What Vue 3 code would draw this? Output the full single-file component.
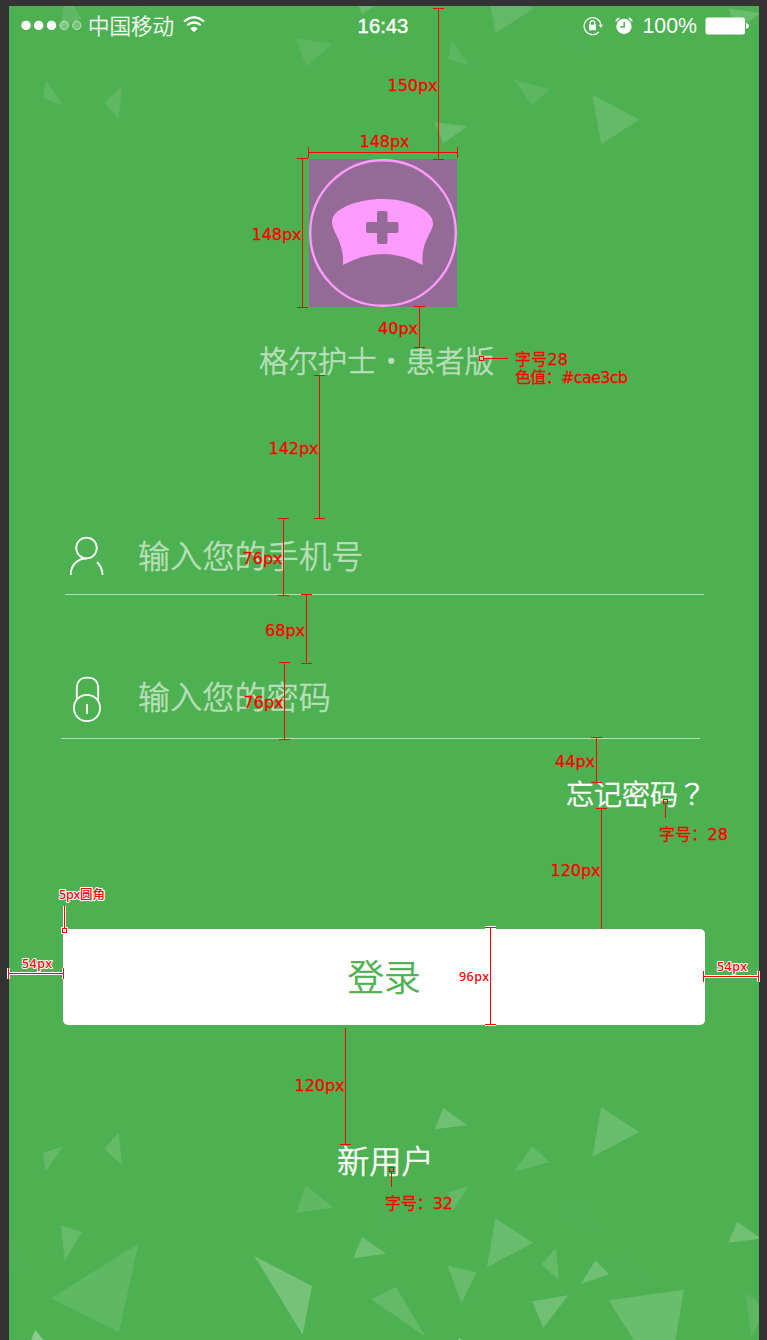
<script setup>
const shards = [
  { p: '43,1153 63.3,1146.3 45.7,1171.3', o: 0.13 },
  { p: '118.7,1132.3 104.3,1149 122,1165.3', o: 0.13 },
  { p: '306,1184.7 333,1207.7 296,1213', o: 0.1 },
  { p: '61,1225 81.7,1232.3 64.7,1261.3', o: 0.14 },
  { p: '9,1238.3 30,1272.7 9,1263.3', o: 0.02 },
  { p: '138.7,1243.3 51,1298.3 119,1332', o: 0.1 },
  { p: '254.3,1256 312,1286 302.7,1334.7', o: 0.23 },
  { p: '35.3,1330 30,1343 46,1343', o: 0.35 },
  { p: '381,1199 416,1216 383,1234', o: 0.02 },
  { p: '362.3,1237 386,1253.7 353,1258.3', o: 0.2 },
  { p: '371,1299.3 395.7,1286.7 425.7,1336.7', o: 0.13 },
  { p: '443.3,1108 467.3,1125.3 434.7,1129.3', o: 0.2 },
  { p: '601.3,1107.3 639.3,1132 592.3,1156.7', o: 0.17 },
  { p: '532,1146.3 549.7,1162.3 514,1171.7', o: 0.12 },
  { p: '448,1192.3 468.7,1186.3 451.7,1211.3', o: 0.12 },
  { p: '495.3,1218.3 533.3,1242.7 487,1267.3', o: 0.16 },
  { p: '556,1247.7 541.7,1264.3 559,1280.7', o: 0.14 },
  { p: '595.3,1260.3 609.3,1274.3 580.7,1284', o: 0.2 },
  { p: '447.3,1265.3 476.3,1272.3 461.7,1303.3', o: 0.15 },
  { p: '532,1301.3 568.3,1295.3 543.3,1327.7', o: 0.2 },
  { p: '608.7,1300.3 684,1289.7 675,1342 635,1342', o: 0.17 },
  { p: '737,1221.7 761,1238.5 728.3,1242.7', o: 0.2 },
  { p: '745.3,1293 762,1305 762,1316 751.3,1337', o: 0.09 },
  { p: '578.7,1200.3 562,1215.7 598,1231', o: 0.02 },
  { p: '627,1253 609,1267.7 645.3,1283.3', o: 0.02 },
  { p: '459.7,1338.5 456,1342 463,1342', o: 0.5 },
]

const rules = [
  'M438.5 8V160M433 8.5h11M433 159.5h11',
  'M308 152.5H458M308.5 147v11M457.5 147v11',
  'M302.5 158V308M297 158.5h11M297 307.5h11',
  'M419.5 306V348M414 306.5h11M414 347.5h11',
  'M319.5 375V519M314 375.5h11M314 518.5h11',
  'M283.5 518V596M278 518.5h11M278 595.5h11',
  'M306.5 594V664M301 594.5h11M301 663.5h11',
  'M284.5 662V740M279 662.5h11M279 739.5h11',
  'M596.5 737V783M591 737.5h11M591 782.5h11',
  'M601.5 808V929M596 808.5h11',
  'M345.5 1028V1145M340 1144.5h11',
  'M479.5 356.5h4v4h-4zM484 358.5H508',
  'M663.5 799.5h4v4h-4zM665.5 804V818',
  'M389.5 1167.5h4v4h-4zM391.5 1172V1187',
]

const outlinedRules = [
  'M490.5 927V1025M485 927.5h11M485 1024.5h11',
  'M8 973.5H64M8.5 968v11M63.5 968v11',
  'M703 976.5H759M703.5 971v11M758.5 971v11',
  'M62.5 928.5h4v4h-4zM64.5 906V928',
]

const labels = [
  { t: '150px', x: 387.5, y: 91, w: 50 },
  { t: '148px', x: 359.5, y: 147, w: 50 },
  { t: '148px', x: 251.5, y: 240, w: 50 },
  { t: '40px', x: 378, y: 334, w: 40 },
  { t: '142px', x: 268.5, y: 454, w: 50 },
  { t: '76px', x: 242.5, y: 564, w: 40 },
  { t: '68px', x: 265, y: 636, w: 40 },
  { t: '76px', x: 243.5, y: 708, w: 40 },
  { t: '44px', x: 555, y: 767, w: 40 },
  { t: '120px', x: 550.5, y: 876, w: 50 },
  { t: '120px', x: 294.5, y: 1091, w: 50 },
  { t: '字号28', x: 515, y: 364.5, w: 53 },
  { t: '色值：#cae3cb', x: 515, y: 382.5, w: 113 },
  { t: '字号：28', x: 659, y: 839.5, w: 69 },
  { t: '字号：32', x: 385, y: 1208.5, w: 68 },
]

const smallLabels = [
  { t: '96px', x: 459, y: 981, w: 30 },
  { t: '54px', x: 22, y: 968, w: 30 },
  { t: '54px', x: 717, y: 971, w: 30 },
  { t: '5px圆角', x: 59, y: 899, w: 46 },
]
</script>

<template>
  <div class="board">
    <svg class="shards" width="767" height="1340" viewBox="0 0 767 1340">
      <defs>
        <clipPath id="screen"><rect x="9" y="6" width="750" height="1334" /></clipPath>
      </defs>
      <g clip-path="url(#screen)" fill="#fff">
        <polygon v-for="(s, i) in shards" :key="'b' + i" :points="s.p" :fill-opacity="s.o" />
        <g transform="translate(0 1251.5) scale(1 -1)" opacity="0.8">
          <polygon v-for="(s, i) in shards" :key="'t' + i" :points="s.p" :fill-opacity="s.o" />
        </g>
      </g>
    </svg>

    <main class="screen">
      <header class="status">
        <div class="status-left">
          <svg width="62" height="12" viewBox="0 0 62 12">
            <g fill="#fff">
              <circle cx="5" cy="6.400" r="4.700" /><circle cx="17.700" cy="6.400" r="4.700" /><circle cx="30.500" cy="6.400" r="4.700" />
            </g>
            <g fill="#fff" fill-opacity=".25" stroke="#fff" stroke-opacity=".6">
              <circle cx="43.200" cy="6.400" r="4.200" /><circle cx="55.800" cy="6.400" r="4.200" />
            </g>
          </svg>
          <span class="carrier">中国移动</span>
          <svg class="wifi" width="22" height="17" viewBox="0 0 22 17" fill="none" stroke="#fff" stroke-width="2.2">
            <path d="M1 5.5Q11-2.8 21 5.5M4.300 9.200Q11 3.800 17.700 9.200" />
            <path d="M7.300 12.400Q11 9.300 14.700 12.400L11 16.300Z" fill="#fff" stroke="none" />
          </svg>
        </div>
        <span class="clock">16:43</span>
        <div class="status-right">
          <svg class="rotation" width="20" height="20" viewBox="0 0 20 20" fill="none" stroke="#fff">
            <path d="M15.800 16A8.500 8.500 0 1 1 18 9" stroke-width="1.2" />
            <path d="M15.700 8.700h4.300L17.900 12z" fill="#fff" stroke="none" />
            <rect x="6" y="8.700" width="7" height="5.500" fill="#fff" stroke="none" />
            <path d="M7.300 9V6.800a2.200 2.200 0 0 1 4.400 0V9" stroke-width="1.4" />
          </svg>
          <svg class="alarm" width="18" height="18" viewBox="0 0 18 18">
            <circle cx="9" cy="9.400" r="7.700" fill="#fff" />
            <path d="M.8 4.400A10 10 0 0 1 4.300 1M17.200 4.400A10 10 0 0 0 13.700 1" fill="none" stroke="#fff" stroke-width="1.6" />
            <path d="M9.200 5v5H5.300" fill="none" stroke="#4db051" stroke-width="1.5" />
          </svg>
          <span class="percent">100%</span>
          <svg class="battery" width="45" height="18" viewBox="0 0 45 18" fill="#fff">
            <rect x=".5" y=".5" width="39.500" height="17" rx="2.5" />
            <path d="M41 6.300q3 .5 3 2.700t-3 2.700z" />
          </svg>
        </div>
      </header>

      <svg class="logo" width="148" height="148" viewBox="0 0 148 148">
        <rect width="148" height="148" fill="#946b97" />
        <circle cx="74" cy="74" r="72.800" fill="none" stroke="#ff9bff" stroke-width="2.4" />
        <path d="M34 106C35.500 82 23 74 23 62.500C23 50 48 40 74 40C100 40 124 51 124 64.500C124 74 111.500 82 113.700 106Q74 84 34 106Z" fill="#ff9bff" />
        <path d="M70 52h6.500q2 0 2 2v9h9q2 0 2 2v7q0 2-2 2h-9v9q0 2-2 2H70q-2 0-2-2v-9h-9q-2 0-2-2v-7q0-2 2-2h9v-9q0-2 2-2z" fill="#946b97" />
      </svg>
      <h1 class="title">格尔护士・患者版</h1>

      <div class="field phone">
        <svg width="36" height="40" viewBox="0 0 36 40" fill="none" stroke="#fff" stroke-width="1.8">
          <circle cx="18.500" cy="12" r="10.300" />
          <path d="M2.700 39C2.700 29 9.500 22.500 18.500 22.500M29 26Q34.500 31.500 34.500 39" />
        </svg>
        <span>输入您的手机号</span>
      </div>
      <div class="field password">
        <svg width="32" height="48" viewBox="0 0 32 48" fill="none" stroke="#fff" stroke-width="1.8">
          <path d="M5.800 24V12.500q0-10.800 10.700-10.800T27.200 12.500V24" />
          <circle cx="16" cy="32" r="13.100" />
          <path d="M16 28v10" />
        </svg>
        <span>输入您的密码</span>
      </div>
      <a class="forgot">忘记密码<span class="mark">？</span></a>
      <button class="login">登录</button>
      <a class="register">新用户</a>
    </main>

    <svg class="notes" width="767" height="1340" viewBox="0 0 767 1340">
      <path v-for="d in rules" :key="d" :d="d" class="rule" />
      <g v-for="d in outlinedRules" :key="d">
        <path :d="d" class="halo" />
        <path :d="d" class="rule" />
      </g>
      <text v-for="(l, i) in labels" :key="'l' + i" :x="l.x" :y="l.y" :textLength="l.w" class="label">{{ l.t }}</text>
      <text v-for="(l, i) in smallLabels" :key="'h' + i" :x="l.x" :y="l.y" :textLength="l.w" class="small">{{ l.t }}</text>
    </svg>
  </div>
</template>

<style>
body {
  background: #333;
}
</style>

<style scoped>
.board {
  position: relative;
  width: 767px;
  height: 1340px;
  box-sizing: border-box;
  padding: 6px 8px 0 9px;
  overflow: hidden;
  background: #333;
  font-family: "Liberation Sans", "Noto Sans CJK SC", sans-serif;
}
.shards,
.notes {
  position: absolute;
  left: 0;
  top: 0;
}
.notes {
  z-index: 2;
}
.shards {
  z-index: 1;
}
.screen {
  display: flex;
  flex-direction: column;
  height: 1334px;
  background: #4db051;
}
.screen > * {
  position: relative;
  z-index: 1;
}
.status {
  display: grid;
  grid-template-columns: 1fr auto 1fr;
  align-items: center;
  height: 40px;
  padding: 0 10px 0 11px;
  color: #fff;
}
.status-left,
.status-right {
  display: flex;
  align-items: center;
}
.status-left {
  margin-top: -2px;
}
.status-left > svg:first-child {
  margin-left: 1px;
}
.status-right {
  justify-content: flex-end;
}
.carrier {
  margin-left: 5px;
  font: 300 21.5px/30px "Noto Sans CJK SC", sans-serif;
  -webkit-text-stroke: 0.3px currentColor;
}
.wifi {
  margin-left: 9px;
  margin-bottom: 1px;
}
.clock {
  margin-right: 3px;
  font-size: 20.3px;
  -webkit-text-stroke: 0.4px #fff;
}
.rotation {
  margin-top: -1px;
}
.alarm {
  margin: -1px 10px 0 12px;
}
.percent {
  font-size: 21.3px;
}
.battery {
  margin: -1px -1px 0 8px;
}
.logo {
  flex: none;
  margin: 113px 0 0 300px;
}
.title {
  margin: 30px 0 0 250px;
  height: 44px;
  font: 300 29.4px/44px "Noto Sans CJK SC", sans-serif;
  color: #b8dfba;
  white-space: nowrap;
}
.title,
.field span,
.forgot,
.login,
.register {
  -webkit-text-stroke: 0.7px currentColor;
}
.field {
  display: flex;
  align-items: center;
  box-sizing: border-box;
  width: 639px;
  height: 77px;
  border-bottom: 1px solid #b8dfba;
  font: 300 32px/48px "Noto Sans CJK SC", sans-serif;
  color: #b8dfba;
}
.field svg {
  flex: none;
}
.phone {
  margin: 137px 0 0 56px;
  padding-left: 3px;
}
.phone span {
  margin: -5px 0 0 34px;
  letter-spacing: 0.2px;
}
.password {
  margin: 67px 0 0 52px;
  padding-left: 10px;
}
.password span {
  margin: -11px 0 0 35px;
  letter-spacing: 0.15px;
}
.forgot {
  align-self: flex-end;
  margin: 33px 53px 0 0;
  font: 300 28px/42px "Noto Sans CJK SC", sans-serif;
  color: #fff;
}
.mark {
  font-family: "Noto Sans CJK TC", sans-serif;
}
.login {
  flex: none;
  width: 642px;
  height: 96px;
  margin: 115px 0 0 54px;
  padding: 0 0 2px;
  border: 0;
  border-radius: 5px;
  background: #fff;
  color: #4db051;
  font: 300 36.5px/94px "Noto Sans CJK SC", sans-serif;
}
.register {
  margin: 110px 0 0 328px;
  font: 300 32.3px/48px "Noto Sans CJK SC", sans-serif;
  color: #fff;
}
.rule {
  fill: none;
  stroke: #f00;
  stroke-width: 1;
  shape-rendering: crispEdges;
}
.halo {
  fill: none;
  stroke: #fff;
  stroke-width: 3;
}
.label {
  fill: #f00;
  stroke: #f00;
  stroke-width: 0.3px;
  font: 16px "DejaVu Sans", "Noto Sans CJK SC", sans-serif;
}
.small {
  fill: #f00;
  font: 500 12.5px "Noto Sans", "Noto Sans CJK SC", sans-serif;
  stroke: #fff;
  stroke-width: 2.2px;
  stroke-linejoin: round;
  paint-order: stroke;
}
</style>
